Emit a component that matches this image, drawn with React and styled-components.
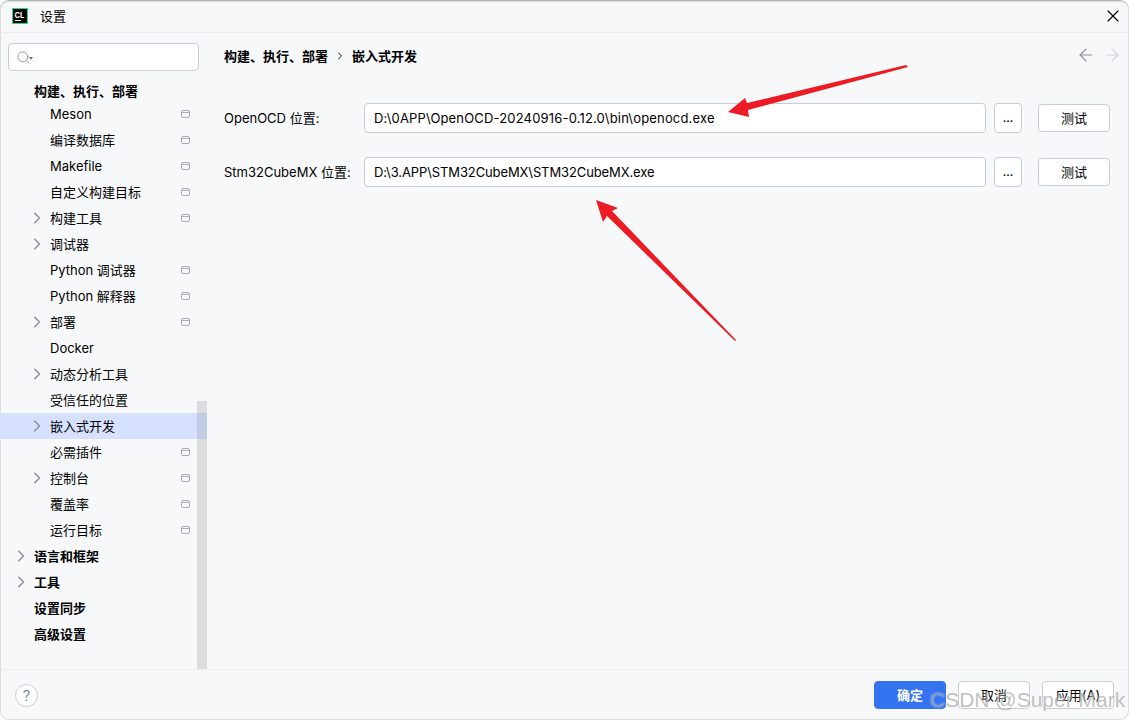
import React from 'react'
import styled, { createGlobalStyle } from 'styled-components'
import { ChevronRight, ArrowLeft, ArrowRight, X, Search } from 'lucide-react'

const FONT = `Inter, "Noto Sans CJK SC", "Liberation Sans", sans-serif`

const GlobalStyle = createGlobalStyle`
html, body {
  margin: 0;
  padding: 0;
  background: #fff;
  overflow: hidden;
}
* {
  box-sizing: border-box;
}
`
const Window = styled.div`
position: relative;
width: 1129px;
height: 720px;
display: flex;
flex-direction: column;
background: #f7f8fa;
border-top: 1px solid #b4b4b4;
border-radius: 9px;
box-shadow: inset 0 0 0 1px #dcdcdc;
overflow: hidden;
font-family: ${FONT};
font-size: 13px;
line-height: 16px;
color: #000;
`
const TitleBar = styled.div`
height: 32px;
flex-shrink: 0;
display: flex;
align-items: center;
padding: 0 6px 1px 12px;
border-bottom: 1px solid #ebecf0;
`
const TitleText = styled.span`
margin-left: 12px;
flex: 1;
`
const CloseBtn = styled.div`
display: flex;
color: #000;
`
const Body = styled.div`
flex: 1;
display: flex;
min-height: 0;
`
const Sidebar = styled.div`
position: relative;
width: 207px;
flex-shrink: 0;
padding-top: 10px;
overflow: hidden;
`
const SearchBox = styled.div`
height: 28px;
margin: 0 8px 7px 8px;
background: #fff;
border: 1px solid #c9ccd6;
border-radius: 4px;
display: flex;
align-items: center;
padding-left: 7px;
color: #6c707e;
`
const SearchCaret = styled.span`
width: 0;
height: 0;
margin-left: -2px;
margin-top: 2px;
border-left: 2.5px solid transparent;
border-right: 2.5px solid transparent;
border-top: 3px solid #6c707e;
`
const Row = styled.div`
height: ${p => p.$first ? 23 : 26}px;
padding-top: ${p => p.$first ? 3 : 0}px;
display: flex;
align-items: center;
padding-left: ${p => p.$bold ? 34 : 50}px;
padding-right: 17px;
position: relative;
font-weight: ${p => p.$bold ? 600 : 400};
background: ${p => p.$selected ? '#d5e1ff' : 'transparent'};
`
const RowLabel = styled.span`
flex: 1;
`
const Expander = styled.span`
position: absolute;
left: ${p => p.$bold ? 11 : 27}px;
top: 3px;
display: flex;
color: #818594;
`
const ProjectIcon = styled.span`
width: 9px;
height: 8px;
padding-top: 1px;
border: 1px solid #a8adbd;
border-radius: 2px;
&::before {
  content: "";
  display: block;
  height: 1px;
  background: #a8adbd;
}
`
const Scrollbar = styled.div`
position: absolute;
right: 0;
top: 368px;
bottom: 0;
width: 10px;
background: rgba(115, 115, 115, 0.2);
`
const Main = styled.div`
flex: 1;
min-width: 0;
padding: 13px 7px 0 17px;
`
const Header = styled.div`
height: 20px;
display: flex;
align-items: center;
font-weight: 600;
margin-bottom: 37px;
`
const CrumbSep = styled.span`
display: flex;
margin: 0 6px 0 6px;
color: #1a1a1a;
`
const HeaderSpacer = styled.span`
flex: 1;
`
const NavIcon = styled.span`
display: flex;
margin-left: 6px;
margin-top: -3px;
color: ${p => p.$off ? '#d3d5db' : '#8b8e99'};
`
const Field = styled.div`
height: 30px;
display: flex;
align-items: center;
padding-right: 12px;
margin-bottom: 24px;
`
const FieldLabel = styled.span`
width: 140px;
flex-shrink: 0;
`
const FieldInput = styled.div`
flex: 1;
height: 30px;
background: #fff;
border: 1px solid #c9ccd6;
border-radius: 4px;
display: flex;
align-items: center;
padding-left: 9px;
letter-spacing: ${p => p.$spacing}px;
`
const DotsBtn = styled.div`
width: 28px;
height: 30px;
margin-left: 8px;
background: #fff;
border: 1px solid #c9ccd6;
border-radius: 4px;
text-align: center;
line-height: 29px;
font-size: 11px;
font-weight: 600;
`
const Button = styled.div`
width: 72px;
height: 28px;
margin-left: ${p => p.$gap}px;
display: flex;
align-items: center;
justify-content: center;
background: ${p => p.$primary ? '#3574f0' : '#fff'};
border: 1px solid ${p => p.$primary ? '#3574f0' : '#c9ccd6'};
border-radius: 4px;
color: ${p => p.$primary ? '#fff' : '#000'};
font-weight: ${p => p.$primary ? 600 : 400};
`
const Footer = styled.div`
height: 51px;
flex-shrink: 0;
border-top: 1px solid #ebecf0;
display: flex;
align-items: flex-start;
padding: 11px 15px 0 15px;
`
const HelpBtn = styled.div`
width: 23px;
height: 23px;
margin-top: 3px;
margin-right: auto;
background: #fff;
border: 1px solid #c9ccd6;
border-radius: 50%;
display: flex;
align-items: center;
justify-content: center;
color: #6c707e;
font-size: 15px;
font-weight: 300;
`
const Arrows = styled.svg`
position: absolute;
left: 0;
top: -1px;
pointer-events: none;
`
const Watermark = styled.div`
position: absolute;
left: 930px;
top: 687px;
font-family: "Liberation Sans", sans-serif;
font-size: 21px;
line-height: 24px;
white-space: nowrap;
color: rgba(130, 130, 130, 0.5);
text-shadow: 0 0 2px rgba(255, 255, 255, 0.7);
`

const tree = [
  { label: '构建、执行、部署', bold: true, first: true },
  { label: 'Meson', icon: true },
  { label: '编译数据库', icon: true },
  { label: 'Makefile', icon: true },
  { label: '自定义构建目标', icon: true },
  { label: '构建工具', icon: true, arrow: true },
  { label: '调试器', arrow: true },
  { label: 'Python 调试器', icon: true },
  { label: 'Python 解释器', icon: true },
  { label: '部署', icon: true, arrow: true },
  { label: 'Docker' },
  { label: '动态分析工具', arrow: true },
  { label: '受信任的位置' },
  { label: '嵌入式开发', arrow: true, selected: true },
  { label: '必需插件', icon: true },
  { label: '控制台', icon: true, arrow: true },
  { label: '覆盖率', icon: true },
  { label: '运行目标', icon: true },
  { label: '语言和框架', bold: true, arrow: true },
  { label: '工具', bold: true, arrow: true },
  { label: '设置同步', bold: true },
  { label: '高级设置', bold: true },
]

const fields = [
  { label: 'OpenOCD 位置:', value: 'D:\\0APP\\OpenOCD-20240916-0.12.0\\bin\\openocd.exe', spacing: 0.17 },
  { label: 'Stm32CubeMX 位置:', value: 'D:\\3.APP\\STM32CubeMX\\STM32CubeMX.exe', spacing: -0.11 },
]

const Logo = () => (
  <svg width="16" height="16" viewBox="0 0 16 16">
    <rect x="0.5" y="0.5" width="15" height="15" fill="#000" stroke="#21d789" />
    <text x="2.5" y="9.5" fill="#fff" fontSize="7.5" fontWeight="700" fontFamily="Inter, sans-serif">CL</text>
    <rect x="3" y="12" width="6" height="1" fill="#fff" />
  </svg>
)

const App = () => (
  <Window>
    <GlobalStyle />
    <TitleBar>
      <Logo />
      <TitleText>设置</TitleText>
      <CloseBtn><X size={20} strokeWidth={1.3} /></CloseBtn>
    </TitleBar>
    <Body>
      <Sidebar>
        <SearchBox>
          <Search size={15} strokeWidth={1.1} />
          <SearchCaret />
        </SearchBox>
        {tree.map(item => (
          <Row key={item.label} $bold={item.bold} $first={item.first} $selected={item.selected}>
            {item.arrow && <Expander $bold={item.bold}><ChevronRight size={20} strokeWidth={1.3} /></Expander>}
            <RowLabel>{item.label}</RowLabel>
            {item.icon && <ProjectIcon />}
          </Row>
        ))}
        <Scrollbar />
      </Sidebar>
      <Main>
        <Header>
          <span>构建、执行、部署</span>
          <CrumbSep><ChevronRight size={12} strokeWidth={2} /></CrumbSep>
          <span>嵌入式开发</span>
          <HeaderSpacer />
          <NavIcon><ArrowLeft size={20} strokeWidth={1.4} /></NavIcon>
          <NavIcon $off><ArrowRight size={20} strokeWidth={1.4} /></NavIcon>
        </Header>
        {fields.map(f => (
          <Field key={f.label}>
            <FieldLabel>{f.label}</FieldLabel>
            <FieldInput $spacing={f.spacing}>{f.value}</FieldInput>
            <DotsBtn>...</DotsBtn>
            <Button $gap={16}>测试</Button>
          </Field>
        ))}
      </Main>
    </Body>
    <Footer>
      <HelpBtn>?</HelpBtn>
      <Button $primary $gap={0}>确定</Button>
      <Button $gap={12}>取消</Button>
      <Button $gap={12}>应用(A)</Button>
    </Footer>
    <Arrows width="1129" height="720" viewBox="0 0 1129 720">
      <polygon fill="#ed1c24" points="728,112 745,98 747,103 906,65 908,67 748,110 749,117" />
      <polygon fill="#ed1c24" points="596,200 618,208 612,211 736,340 735,341 607,216 603,222" />
    </Arrows>
    <Watermark>CSDN @Super Mark</Watermark>
  </Window>
)

export default App
